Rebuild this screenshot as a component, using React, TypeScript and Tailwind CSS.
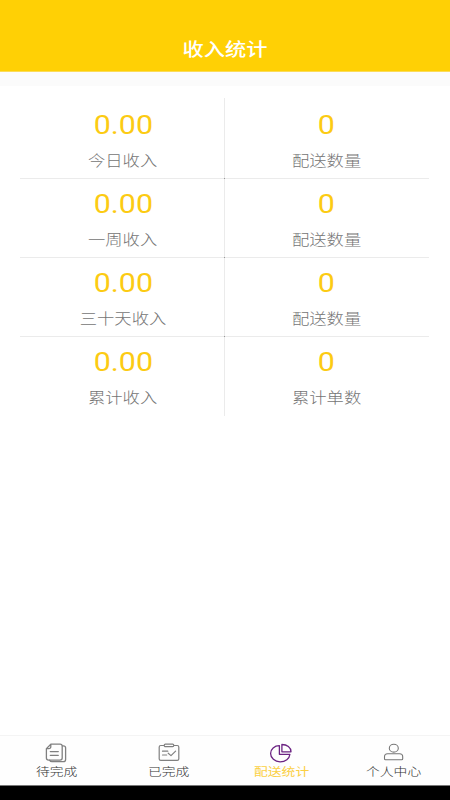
import React from 'react';

const rows = [
  ['0.00', '今日收入', '0', '配送数量'],
  ['0.00', '一周收入', '0', '配送数量'],
  ['0.00', '三十天收入', '0', '配送数量'],
  ['0.00', '累计收入', '0', '累计单数'],
];

function Stat({ value, label }: { value: string; label: string }) {
  return (
    <div className="flex flex-1 flex-col items-center">
      <span className="mt-[10px] h-[30px] scale-x-[1.17] text-[26px] font-[370] leading-[30px] text-[#fccb13]">{value}</span>
      <span className="mt-[11px] h-5 scale-x-[1.17] whitespace-nowrap text-[14.8px] font-light leading-5 text-[#757575]">{label}</span>
    </div>
  );
}

function PagesIcon() {
  return (
    <svg width="22" height="20" viewBox="0 0 22 20" fill="none" stroke="#808080" strokeWidth="1.3" strokeLinejoin="round" strokeLinecap="round">
      <path d="M5.800 1.200h9.200c1.400 0 2.200.7 2.200 1.900v12c0 1.200-.8 2-2.200 2H3.600c-1.400 0-2.200-.8-2.200-2V5.600L5.800 1.200v2.500c0 1.300-.7 1.900-1.900 1.900H1.400" />
      <path d="M17.400 2.800h.8c1.600 0 2.400.7 2.400 2v11.700c0 1.400-.9 2.200-2.400 2.200H7c-1.200 0-1.900-.4-2.300-1.500M5.300 8.600h8M5.300 12.300h8" />
    </svg>
  );
}

function ClipboardIcon() {
  return (
    <svg width="22" height="20" viewBox="0 0 22 20" fill="none" stroke="#808080" strokeWidth="1.2" strokeLinejoin="round" strokeLinecap="round">
      <path d="M6 2.500H2.800c-1 0-1.600.5-1.600 1.400v12.000c0 .9.600 1.400 1.600 1.400h16.400c1 0 1.600-.5 1.600-1.400V3.900c0-.9-.6-1.400-1.600-1.400H16" />
      <rect x="6.200" y="1.100" width="9.600" height="2.600" rx="1.200" />
      <path d="M4.500 8.200h5.300M4.500 12h4.200M10.200 10.200l2.800 2.400 4.600-4.500" />
    </svg>
  );
}

function PieIcon() {
  return (
    <svg width="24" height="20" viewBox="0 0 24 20" fill="none" stroke="#6b2382" strokeWidth="1.300" strokeLinejoin="round">
      <path d="M10.400 2.700C5.400 2.700 1.600 6 1.600 10.500s4.200 8.300 9.500 8.300 9.400-3 9.800-7.500H10.400V2.700Z" />
      <path d="M12.900 1.500v7.300h9.100C22 4.700 18.100 1.500 12.900 1.500Z" />
    </svg>
  );
}

function PersonIcon() {
  return (
    <svg width="22" height="20" viewBox="0 0 22 20" fill="none" stroke="#777" strokeWidth="1.100">
      <ellipse cx="10.800" cy="5.200" rx="4.500" ry="3.900" />
      <path d="M4.600 10.800h12c2 0 3.100 1.100 3.100 3v2c0 .7-.4 1-1 1H2.500c-.6 0-1-.3-1-1v-2c0-1.900 1.100-3 3.100-3Z" />
    </svg>
  );
}

const tabs = [
  { label: '待完成', Icon: PagesIcon },
  { label: '已完成', Icon: ClipboardIcon },
  { label: '配送统计', Icon: PieIcon, active: true },
  { label: '个人中心', Icon: PersonIcon },
];

export default function App() {
  return (
    <div className="flex h-[800px] w-[450px] flex-col overflow-hidden bg-white font-[Roboto,'Noto_Sans_CJK_SC',sans-serif]">
      <header className="flex h-[72px] shrink-0 justify-center border-b border-[#fbdc59] bg-[#ffd005] pt-[38px]">
        <h1 className="h-6 scale-x-[1.18] text-[18px] font-medium leading-6 text-white">收入统计</h1>
      </header>
      <div className="h-[14px] shrink-0 bg-[#fbfbfb]" />
      <main className="flex-1 pl-5 pr-[21px] pt-3">
        {rows.map(([income, incomeLabel, count, countLabel], i) => (
          <section key={i} className={`flex ${i === 0 ? 'h-[81px]' : 'h-[79px]'} ${i < 3 ? 'border-b border-[#ebebeb]' : ''}`}>
            <div className={`relative flex w-[205px] border-r border-[#ebebeb] pl-[2px] ${i === 0 ? 'pt-0.5' : ''}`}>
              <Stat value={income} label={incomeLabel} />
              {i < 3 && <i className="absolute -bottom-px -right-px size-px bg-[#999]" />}
            </div>
            <div className={`flex flex-1 pr-px ${i === 0 ? 'pt-0.5' : ''}`}>
              <Stat value={count} label={countLabel} />
            </div>
          </section>
        ))}
      </main>
      <nav className="flex h-[50px] shrink-0 border-t border-[#f4f4f4] bg-[#fefefe]">
        {tabs.map(({ label, Icon, active }) => (
          <div key={label} className="flex flex-1 flex-col items-center pt-[7px]">
            <Icon />
            <span className={`mt-px h-4 scale-x-[1.17] whitespace-nowrap text-[11.8px] leading-4 ${active ? 'font-normal text-[#fbd044]' : 'font-light text-[#333]'}`}>{label}</span>
          </div>
        ))}
      </nav>
      <div className="h-[15px] shrink-0 border-t border-[#777] bg-black" />
    </div>
  );
}
